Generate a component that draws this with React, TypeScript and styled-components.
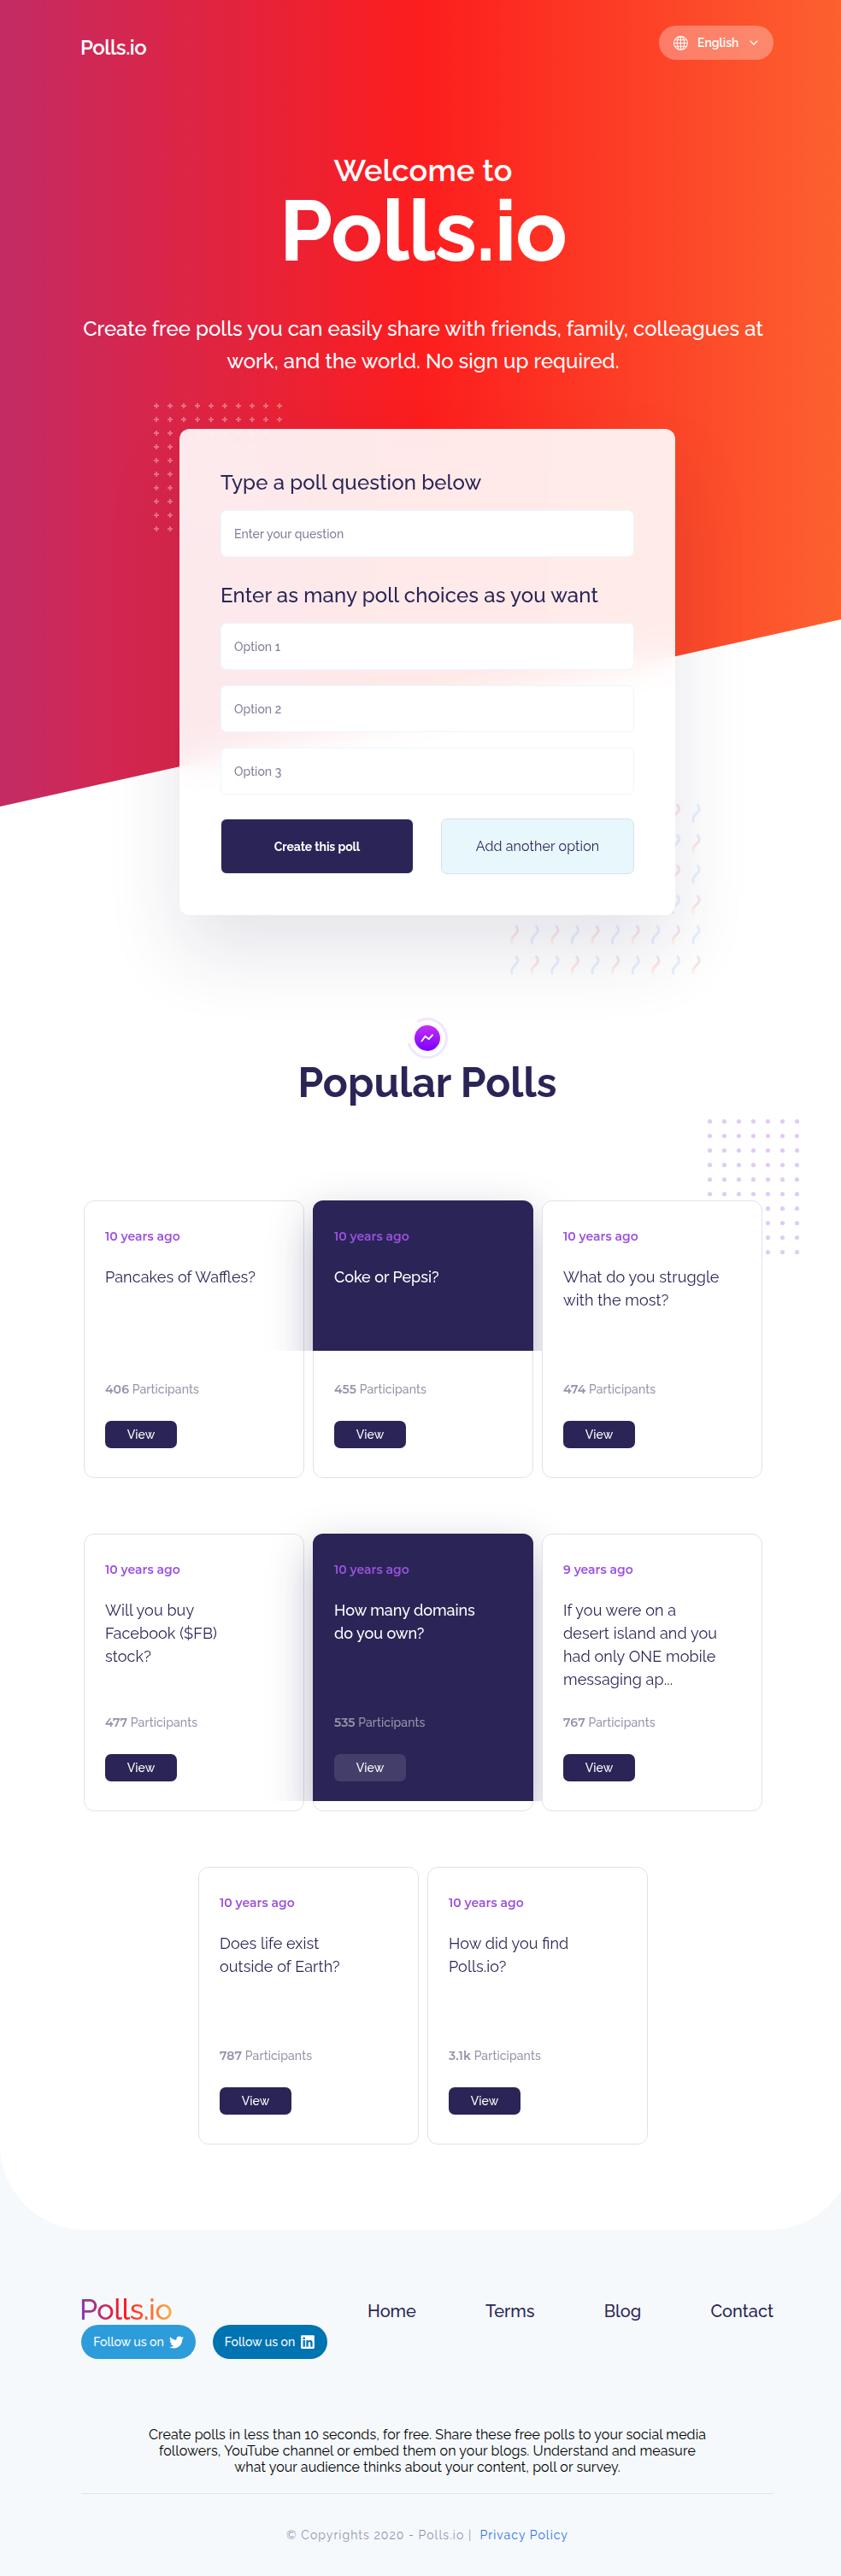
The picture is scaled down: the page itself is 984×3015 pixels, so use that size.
import React from "react";
import styled, { createGlobalStyle, css } from "styled-components";
import { FaLinkedin, FaTwitter } from "react-icons/fa";
import { BsGlobe } from "react-icons/bs";

const INK = "#2a2556";

const GlobalStyle = createGlobalStyle`
  *, *::before, *::after { box-sizing: border-box; }
  body {
    margin: 0;
    font-family: Raleway, Lato, sans-serif;
    font-feature-settings: "liga" 1;
    color: ${INK};
    background: #f5f9fc;
  }
  a { color: inherit; text-decoration: none; }
  h1, h2, h3, p { margin: 0; }
  button, input { font-family: inherit; }
`;

const Viewport = styled.div`
  overflow: hidden;
`;

const Page = styled.div`
  width: 1000px;
  height: 3015px;
  display: flex;
  flex-direction: column;
`;

const Main = styled.main`
  position: relative;
  background: #fff;
  border-radius: 0 0 100px 100px;
  padding-bottom: 100px;
`;

const HeroBackdrop = styled.div`
  position: absolute;
  inset: 0 0 auto 0;
  height: 944px;
  background: linear-gradient(90deg, #833ab4 -54%, #fd1d1d 49.5%, #fcb045 155%);
  clip-path: polygon(0 0, 100% 0, 100% 721.5px, 0 944px);
`;

const Header = styled.header`
  position: relative;
  display: flex;
  justify-content: space-between;
  align-items: flex-start;
  padding: 30px 95px 0;
`;

const HeaderLogo = styled.a`
  margin: 12px 0 0 -1px;
  font-size: 24px;
  line-height: 28px;
  font-weight: 600;
  letter-spacing: -0.45px;
  color: #fff;
`;

const LanguageButton = styled.button`
  display: flex;
  align-items: center;
  width: 134px;
  height: 40px;
  padding: 0 18px 0 17px;
  border: 0;
  border-radius: 20px;
  background: rgba(255, 255, 255, 0.3);
  color: #fff;
  font-size: 14px;
  font-weight: 600;
  span { flex: 1; margin-left: 11px; text-align: left; }
`;

const Hero = styled.section`
  position: relative;
  padding-top: 108px;
  display: flex;
  flex-direction: column;
  align-items: center;
  text-align: center;
`;

const HeroTitle = styled.h1`
  margin-right: 10px;
  color: #fff;
  font-size: 36px;
  line-height: 42px;
  font-weight: 600;
  letter-spacing: 0.15px;
  strong {
    display: block;
    font-size: 100px;
    line-height: 100px;
    font-weight: 700;
    letter-spacing: -0.9px;
  }
`;

const HeroText = styled.p`
  width: 810px;
  margin: 46px 10px 0 0;
  color: #fff;
  font-size: 24px;
  line-height: 38px;
  font-weight: 500;
`;

const FormWrap = styled.div`
  position: relative;
  width: 580px;
  margin-top: 60px;
`;

const Pluses = styled.svg`
  position: absolute;
  left: -35px;
  top: -35px;
`;

const Squiggles = styled.svg`
  position: absolute;
  right: -35px;
  bottom: -73px;
`;

const PollForm = styled.form`
  position: relative;
  display: flex;
  flex-direction: column;
  height: 569px;
  padding: 49px 48px 48px;
  border-radius: 12px;
  background: rgba(255, 255, 255, 0.9);
  backdrop-filter: blur(20px);
  box-shadow: 0 44px 88px rgba(42, 37, 86, 0.12);
  text-align: left;
`;

const FormTitle = styled.h3<{ $spaced?: boolean }>`
  margin: ${(p) => (p.$spaced ? "31px" : "0")} 0 0;
  font-size: 24px;
  line-height: 28px;
  font-weight: 500;
  letter-spacing: 0.12px;
`;

const Field = styled.input`
  height: 55px;
  margin-top: 18px;
  padding: 0 15px;
  border: 1px solid #e8f8fc;
  border-radius: 7px;
  background: #fff;
  color: ${INK};
  font-size: 14px;
  font-weight: 500;
  letter-spacing: 0.06px;
  &::placeholder { color: ${INK}; opacity: 0.6; }
`;

const FormActions = styled.div`
  display: flex;
  gap: 32px;
  margin-top: 28px;
`;

const FormButton = styled.button<{ $primary?: boolean }>`
  flex: 1;
  height: 65px;
  border-radius: 7px;
  font-size: 16px;
  font-weight: 400;
  letter-spacing: 0.12px;
  border: 1px solid #d5e3e9;
  background: #e8f7fc;
  color: ${INK};
  ${(p) => p.$primary && css`
    border-color: #e8f8fc;
    background: ${INK};
    color: #fff;
    font-size: 14px;
    font-weight: 700;
    letter-spacing: -0.12px;
  `}
`;

const Popular = styled.section`
  position: relative;
  display: flex;
  flex-direction: column;
  align-items: center;
  padding-top: 120px;
`;

const PopularTitle = styled.h2`
  font-size: 48px;
  line-height: 56px;
  font-weight: 700;
`;

const Dots = styled.svg`
  position: absolute;
  left: 822px;
  top: 233px;
`;

const PollGrid = styled.div`
  position: relative;
  display: flex;
  flex-wrap: wrap;
  justify-content: center;
  gap: 65px 10px;
  width: 810px;
  margin-top: 110px;
  padding-right: 10px;
`;

const ViewButton = styled.a`
  align-self: flex-start;
  width: 84px;
  height: 32px;
  margin-top: 28px;
  border-radius: 7px;
  background: ${INK};
  color: #fff;
  font-size: 14px;
  line-height: 32px;
  font-weight: 500;
  letter-spacing: 0.1px;
  text-align: center;
`;

const PollDate = styled.time`
  color: #9b51e0;
  font-family: Montserrat, Raleway, sans-serif;
  font-size: 14px;
  line-height: 18px;
  font-weight: 600;
`;

const PollQuestion = styled.h3`
  flex: 1;
  margin-top: 25px;
  font-size: 18px;
  line-height: 27px;
  font-weight: 400;
  letter-spacing: 0.1px;
  white-space: pre-line;
`;

const Participants = styled.p`
  color: rgba(42, 37, 86, 0.5);
  font-size: 14px;
  line-height: 18px;
  font-weight: 500;
  letter-spacing: 0.1px;
  b {
    font-family: Montserrat, Raleway, sans-serif;
    font-weight: 600;
  }
`;

/* $fill is how far down, in px, the dark layer of a featured card reaches */
const PollCard = styled.article<{ $fill?: number }>`
  position: relative;
  display: flex;
  flex-direction: column;
  width: 258px;
  height: 325px;
  padding: 32px 24px 34px;
  border: 1px solid #e1e0e7;
  border-radius: 12px;
  background: #fff;
  > * { position: relative; }
  ${(p) => p.$fill && css`
    &::before {
      content: "";
      position: absolute;
      inset: -1px;
      border-radius: 12px;
      background: ${INK};
      box-shadow: 0 20px 50px rgba(42, 37, 86, 0.35);
      clip-path: inset(-80px -80px ${325 - p.$fill}px -80px);
    }
    ${PollQuestion} { color: #fff; font-weight: 550; letter-spacing: -0.05px; }
  `}
  ${(p) => (p.$fill ?? 0) > 300 && css`
    ${Participants} { color: rgba(255, 255, 255, 0.5); }
    ${ViewButton} { background: rgba(255, 255, 255, 0.12); }
  `}
`;

const Footer = styled.footer`
  display: flex;
  flex-direction: column;
  padding: 76px 95px 0;
`;

const FooterTop = styled.div`
  display: flex;
  justify-content: space-between;
  align-items: flex-start;
`;

const FooterLogo = styled.a`
  display: block;
  width: 108px;
  margin-left: -2px;
  font-size: 34px;
  line-height: 35px;
  font-weight: 500;
  letter-spacing: -0.5px;
  background: linear-gradient(90deg, #833ab4, #fd1d1d 50%, #fcb045);
  background-clip: text;
  -webkit-background-clip: text;
  color: transparent;
`;

const Socials = styled.div`
  display: flex;
  gap: 20px;
`;

const SocialLink = styled.a<{ $tone: string }>`
  display: flex;
  align-items: center;
  justify-content: center;
  gap: 6px;
  width: 134px;
  height: 40px;
  border-radius: 20px;
  background: ${(p) => p.$tone};
  color: #fff;
  font-size: 14px;
  font-weight: 500;
`;

const FooterNav = styled.nav`
  display: flex;
  justify-content: space-between;
  width: 475px;
  margin-top: 7px;
  font-size: 20px;
  line-height: 24px;
  font-weight: 500;
`;

const About = styled.p`
  align-self: center;
  width: 658px;
  margin-top: 80px;
  color: #000;
  font-size: 16px;
  line-height: 18.78px;
  letter-spacing: 0.09px;
  text-align: center;
`;

const Legal = styled.p`
  margin-top: 21px;
  padding-top: 39px;
  border-top: 1px solid #dfe5ea;
  color: rgba(42, 37, 86, 0.5);
  font-size: 14px;
  line-height: 18px;
  letter-spacing: 1.05px;
  text-align: center;
  a { color: #2f72e8; }
`;

const range = (n: number) => Array.from({ length: n }, (_, i) => i);

const PlusPattern = () => (
  <Pluses width="156" height="156" stroke="#fff" strokeOpacity="0.35" strokeWidth="2">
    {range(10).flatMap((r) =>
      range(10).map((c) => (
        <path key={`${r}-${c}`} d={`M${5 + c * 16} ${8 + r * 16}h6M${8 + c * 16} ${5 + r * 16}v6`} />
      ))
    )}
  </Pluses>
);

const SquigglePattern = () => (
  <Squiggles width="232" height="204" fill="none" strokeWidth="3" strokeLinecap="round">
    <defs>
      <linearGradient id="warm" x1="0" y1="0" x2="0" y2="1">
        <stop stopColor="#833ab4" />
        <stop offset="0.5" stopColor="#fd1d1d" />
        <stop offset="1" stopColor="#fcb045" />
      </linearGradient>
    </defs>
    {range(6).flatMap((r) =>
      range(10).map((c) => (
        <path
          key={`${r}-${c}`}
          transform={`translate(${9 + c * 23.6} ${12 + r * 35.5})`}
          d="M2-9.600C4.800-6.500 4.600-3.600.6.2S-4 5.600-3.200 9.600"
          stroke={(r + c) % 2 ? "#2f80ed" : "url(#warm)"}
          opacity="0.12"
        />
      ))
    )}
  </Squiggles>
);

const DotPattern = () => (
  <Dots width="120" height="164" fill="#e0ccf5">
    {range(10).flatMap((r) =>
      range(7).map((c) => <circle key={`${r}-${c}`} cx={8.5 + c * 17} cy={8.5 + r * 17} r="2.6" />)
    )}
  </Dots>
);

const TrendIcon = () => (
  <svg width="48" height="48" fill="none" strokeLinecap="round">
    <defs>
      <linearGradient id="trend" x1="0" y1="0" x2="0" y2="1">
        <stop stopColor="#c62ef6" />
        <stop offset="1" stopColor="#7b00ff" />
      </linearGradient>
    </defs>
    <path d="M13.200 4.300A22.500 22.500 0 1 1 2.500 31" stroke="#f2e6ff" strokeWidth="3" />
    <circle cx="24" cy="24" r="15" fill="url(#trend)" />
    <path d="M18 29l4-5.500 4 3 4.300-5" stroke="#4a0aa0" strokeOpacity="0.4" strokeWidth="2" />
    <path d="M17.500 27.500l4-5.500 4.300 3.200 4.200-4.700" stroke="#fff" strokeWidth="2" />
  </svg>
);

type Poll = { date: string; question: string; count: string; fill?: number };

const polls: Poll[] = [
  { date: "10 years ago", question: "Pancakes of Waffles?", count: "406" },
  { date: "10 years ago", question: "Coke or Pepsi?", count: "455", fill: 176 },
  { date: "10 years ago", question: "What do you struggle\nwith the most?", count: "474" },
  { date: "10 years ago", question: "Will you buy\nFacebook ($FB)\nstock?", count: "477" },
  { date: "10 years ago", question: "How many domains\ndo you own?", count: "535", fill: 313 },
  { date: "9 years ago", question: "If you were on a\ndesert island and you\nhad only ONE mobile\nmessaging ap...", count: "767" },
  { date: "10 years ago", question: "Does life exist\noutside of Earth?", count: "787" },
  { date: "10 years ago", question: "How did you find\nPolls.io?", count: "3.1k" },
];

export default function App() {
  return (
    <Viewport>
      <GlobalStyle />
      <Page>
        <Main>
          <HeroBackdrop />
          <Header>
            <HeaderLogo href="#">Polls.io</HeaderLogo>
            <LanguageButton>
              <BsGlobe size={17} />
              <span>English</span>
              <svg width="10" height="6" fill="none" stroke="#fff" strokeWidth="1.3">
                <path d="M.7.7L5 5 9.300.7" />
              </svg>
            </LanguageButton>
          </Header>
          <Hero>
            <HeroTitle>
              Welcome to <strong>Polls.io</strong>
            </HeroTitle>
            <HeroText>
              Create free polls you can easily share with friends, family, colleagues at work, and the world. No sign up
              required.
            </HeroText>
            <FormWrap>
              <PlusPattern />
              <SquigglePattern />
              <PollForm>
                <FormTitle>Type a poll question below</FormTitle>
                <Field placeholder="Enter your question" />
                <FormTitle $spaced>Enter as many poll choices as you want</FormTitle>
                <Field placeholder="Option 1" />
                <Field placeholder="Option 2" />
                <Field placeholder="Option 3" />
                <FormActions>
                  <FormButton type="button" $primary>Create this poll</FormButton>
                  <FormButton type="button">Add another option</FormButton>
                </FormActions>
              </PollForm>
            </FormWrap>
          </Hero>
          <Popular>
            <TrendIcon />
            <PopularTitle>Popular Polls</PopularTitle>
            <DotPattern />
            <PollGrid>
              {polls.map((poll) => (
                <PollCard key={poll.question} $fill={poll.fill}>
                  <PollDate>{poll.date}</PollDate>
                  <PollQuestion>{poll.question}</PollQuestion>
                  <Participants>
                    <b>{poll.count}</b> Participants
                  </Participants>
                  <ViewButton href="#">View</ViewButton>
                </PollCard>
              ))}
            </PollGrid>
          </Popular>
        </Main>
        <Footer>
          <FooterTop>
            <div>
              <FooterLogo href="#">Polls.io</FooterLogo>
              <Socials>
                <SocialLink href="#" $tone="#2d9cdb">
                  Follow us on <FaTwitter size={17} />
                </SocialLink>
                <SocialLink href="#" $tone="#0073b1">
                  Follow us on <FaLinkedin size={18} />
                </SocialLink>
              </Socials>
            </div>
            <FooterNav>
              <a href="#">Home</a>
              <a href="#">Terms</a>
              <a href="#">Blog</a>
              <a href="#">Contact</a>
            </FooterNav>
          </FooterTop>
          <About>
            Create polls in less than 10 seconds, for free. Share these free polls to your social media followers, YouTube
            channel or embed them on your blogs. Understand and measure what your audience thinks about your content,
            poll or survey.
          </About>
          <Legal>
            © Copyrights 2020 - Polls.io |&nbsp; <a href="#">Privacy Policy</a>
          </Legal>
        </Footer>
      </Page>
    </Viewport>
  );
}
